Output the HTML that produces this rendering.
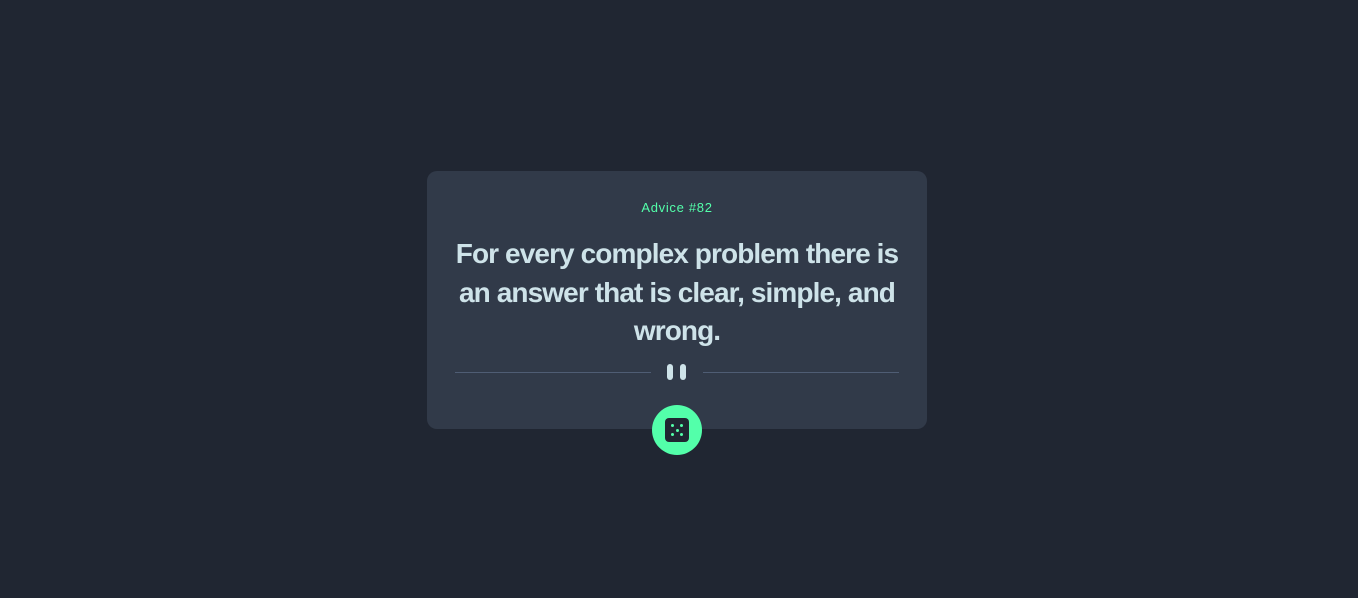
<!DOCTYPE html>
<html><head><style>
html,body{margin:0;height:100%;background:#202632;}
body{width:1358px;height:598px;position:relative;overflow:hidden;font-family:"Liberation Sans",sans-serif;}
.card{position:absolute;left:427px;top:171px;width:500px;height:258px;background:#313a49;border-radius:10px;}
.label{position:absolute;top:29px;left:0;width:100%;text-align:center;color:#53ffaa;font-size:13px;letter-spacing:0.7px;}
.quote{position:absolute;top:64px;left:15px;width:470px;text-align:center;color:#cee3e9;font-size:28px;font-weight:bold;line-height:38.5px;letter-spacing:-0.9px;}
.line{position:absolute;top:201px;height:1px;width:196px;background:#4f5d74;}
.bar{position:absolute;top:193px;width:6px;height:16px;border-radius:3px;background:#cee3e9;}
.btn{position:absolute;left:652px;top:405px;width:50px;height:50px;border-radius:50%;background:#53ffaa;}
.dice{position:absolute;left:13px;top:13px;width:24px;height:24px;border-radius:4px;background:#202632;}
.d{position:absolute;width:3px;height:3px;border-radius:50%;background:#53ffaa;}
</style></head><body>
<div class="card">
<div class="label">Advice #82</div>
<div class="quote">For every complex problem there is an answer that is clear, simple, and wrong.</div>
<div class="line" style="left:28px"></div>
<div class="line" style="left:276px"></div>
<div class="bar" style="left:240px"></div>
<div class="bar" style="left:253px"></div>
</div>
<div class="btn"><div class="dice">
<div class="d" style="left:6px;top:6px"></div><div class="d" style="left:15px;top:6px"></div>
<div class="d" style="left:10.5px;top:10.5px"></div>
<div class="d" style="left:6px;top:15px"></div><div class="d" style="left:15px;top:15px"></div>
</div></div>
</body></html>
